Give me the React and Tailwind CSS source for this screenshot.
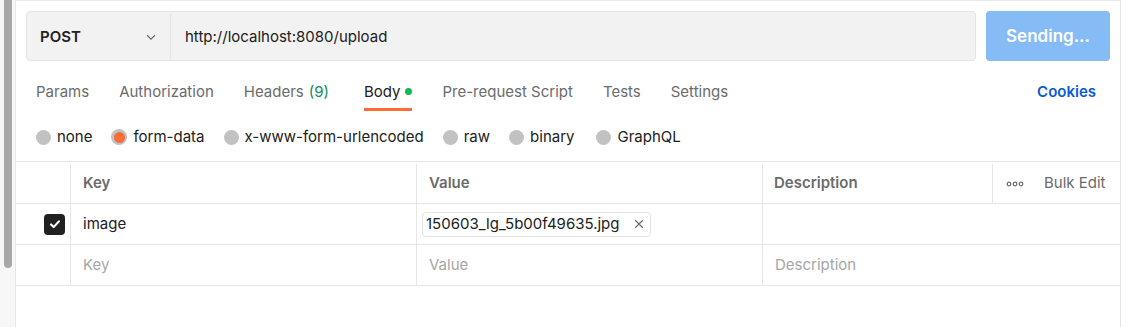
export default function App() {
  const tabs = [
    { label: 'Params' },
    { label: 'Authorization' },
    { label: 'Headers', count: '(9)' },
    { label: 'Body', active: true },
    { label: 'Pre-request Script' },
    { label: 'Tests' },
    { label: 'Settings' },
  ]
  const bodyTypes = ['none', 'form-data', 'x-www-form-urlencoded', 'raw', 'binary', 'GraphQL']

  return (
    <div className="flex h-[327px] w-[1143px] bg-white font-['Inter',sans-serif] text-[15px] text-[#212121] overflow-hidden">
      <div className="w-[15px] shrink-0 bg-[#f7f7f7]">
        <div className="ml-[4px] h-[268px] w-[8px] rounded-b-[4px] bg-[#a8a8a8]" />
      </div>

      <div className="flex w-[1106px] shrink-0 flex-col border-x border-t border-[#e6e6e6]">
        {/* request bar */}
        <div className="flex gap-[10px] px-[10px] pt-[10px]">
          <div className="flex h-[50px] flex-1 rounded-[4px] border border-[#e3e3e3] bg-[#f2f2f2] pt-[2px]">
            <div className="flex w-[144px] items-center justify-between border-r border-[#e3e3e3] pl-[13px] pr-[12px]">
              <span className="font-semibold text-[#212121]">POST</span>
              <svg viewBox="0 0 16 16" className="h-[14px] w-[14px] text-[#6b6b6b]" fill="none" stroke="currentColor" strokeWidth="1.3">
                <path d="M3.5 6l4.5 4.5L12.5 6" />
              </svg>
            </div>
            <div className="flex items-center pl-[14px] text-[#212121]">http://localhost:8080/upload</div>
          </div>
          <button className="h-[50px] w-[124px] rounded-[4px] bg-[#85bcf5] pt-[2px] text-[17px] font-semibold text-white">
            Sending...
          </button>
        </div>

        {/* tabs */}
        <div className="flex h-[50px] items-end justify-between pl-[20px] pr-[24px]">
          <div className="flex gap-[30px]">
            {tabs.map((t) => (
              <div key={t.label} className="flex flex-col">
                <div className={`flex items-center pb-[5px] ${t.active ? 'text-[#212121]' : 'text-[#6b6b6b]'}`}>
                  {t.label}
                  {t.count && <span className="ml-[5px] mr-[5px] text-[#0f8a5f]">{t.count}</span>}
                  {t.active && <span className="ml-[5px] h-[7px] w-[7px] rounded-full bg-[#0cbb52]" />}
                </div>
                <div className={`h-[3px] ${t.active ? 'bg-[#ff6c37]' : 'bg-transparent'}`} />
              </div>
            ))}
          </div>
          <div className="pb-[8px] font-semibold text-[#0b5bd3]">Cookies</div>
        </div>

        {/* body types */}
        <div className="flex h-[50px] items-center gap-[19px] px-[20px] pt-[2px]">
          {bodyTypes.map((b) => (
            <div key={b} className={`flex items-center gap-[6px] ${b === 'GraphQL' ? 'ml-[3px]' : ''}`}>
              {b === 'form-data' ? (
                <span className="flex h-[16px] w-[16px] items-center justify-center rounded-full bg-[#c2c2c2]">
                  <span className="h-[11px] w-[11px] rounded-full bg-[#ff6c37]" />
                </span>
              ) : (
                <span className="h-[15px] w-[15px] rounded-full bg-[#c2c2c2]" />
              )}
              <span className="text-[#212121]">{b}</span>
            </div>
          ))}
        </div>

        {/* table */}
        <div className="border-t border-[#e6e6e6]">
          <div className="flex h-[42px] border-b border-[#e6e6e6] pt-[2px] font-semibold text-[#6b6b6b]">
            <div className="w-[55px] border-r border-[#e6e6e6]" />
            <div className="flex w-[346px] items-center border-r border-[#e6e6e6] pl-[12px]">Key</div>
            <div className="flex w-[346px] items-center border-r border-[#e6e6e6] pl-[12px]">Value</div>
            <div className="flex w-[230px] items-center border-r border-[#e6e6e6] pl-[11px]">Description</div>
            <div className="flex flex-1 items-center pl-[13px] font-normal">
              <svg viewBox="0 0 18 6" className="mr-[20px] h-[6px] w-[18px] text-[#6b6b6b]" fill="none" stroke="currentColor" strokeWidth="1.2">
                <circle cx="3" cy="3" r="1.8" />
                <circle cx="9" cy="3" r="1.8" />
                <circle cx="15" cy="3" r="1.8" />
              </svg>
              <span>Bulk Edit</span>
            </div>
          </div>
          <div className="flex h-[41px] border-b border-[#e6e6e6]">
            <div className="flex w-[55px] items-center justify-end border-r border-[#e6e6e6] pr-[5px]">
              <span className="flex h-[21px] w-[21px] items-center justify-center rounded-[4px] bg-[#212121]">
                <svg viewBox="0 0 16 16" className="h-[14px] w-[14px]" fill="none" stroke="white" strokeWidth="2.4" strokeLinecap="round" strokeLinejoin="round">
                  <path d="M3.5 8.5l3 3 6-6.5" />
                </svg>
              </span>
            </div>
            <div className="flex w-[346px] items-center border-r border-[#e6e6e6] pl-[12px]">image</div>
            <div className="flex w-[346px] items-center border-r border-[#e6e6e6] pl-[5px]">
              <span className="flex h-[25px] items-center gap-[14px] rounded-[4px] border border-[#e3e3e3] pl-[3px] pr-[6px]">
                150603_lg_5b00f49635.jpg
                <svg viewBox="0 0 12 12" className="h-[10px] w-[10px] text-[#6b6b6b]" fill="none" stroke="currentColor" strokeWidth="1.4">
                  <path d="M1.5 1.5l9 9M10.5 1.5l-9 9" />
                </svg>
              </span>
            </div>
            <div className="flex-1" />
          </div>
          <div className="flex h-[41px] border-b border-[#e6e6e6] text-[#a6a6a6]">
            <div className="w-[55px] border-r border-[#e6e6e6]" />
            <div className="flex w-[346px] items-center border-r border-[#e6e6e6] pl-[12px]">Key</div>
            <div className="flex w-[346px] items-center border-r border-[#e6e6e6] pl-[12px]">Value</div>
            <div className="flex flex-1 items-center pl-[12px]">Description</div>
          </div>
        </div>
      </div>
    </div>
  )
}
